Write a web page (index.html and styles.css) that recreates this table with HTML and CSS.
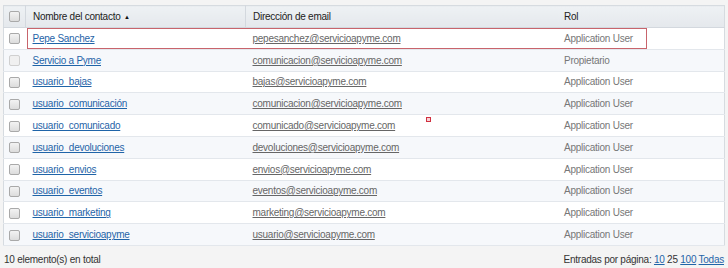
FILE: index.html
```html
<!DOCTYPE html>
<html lang="es">
<head>
<meta charset="utf-8">
<link rel="stylesheet" href="styles.css">
</head>
<body>
<div class="wrap">
  <table class="grid">
    <thead>
      <tr>
        <th class="c-chk"><span class="chk"></span></th>
        <th class="c-name sorted">Nombre del contacto <span class="arrow">&#9650;</span></th>
        <th class="c-mail">Dirección de email</th>
        <th class="c-rol">Rol</th>
      </tr>
    </thead>
    <tbody>
      <tr><td class="c-chk"><span class="chk"></span></td><td><a class="name" href="#">Pepe Sanchez</a></td><td><a class="mail" href="#">pepesanchez@servicioapyme.com</a></td><td class="rol">Application User</td></tr>
      <tr><td class="c-chk"><span class="chk dis"></span></td><td><a class="name" href="#">Servicio a Pyme</a></td><td><a class="mail" href="#">comunicacion@servicioapyme.com</a></td><td class="rol">Propietario</td></tr>
      <tr><td class="c-chk"><span class="chk"></span></td><td><a class="name" href="#">usuario_bajas</a></td><td><a class="mail" href="#">bajas@servicioapyme.com</a></td><td class="rol">Application User</td></tr>
      <tr><td class="c-chk"><span class="chk"></span></td><td><a class="name" href="#">usuario_comunicación</a></td><td><a class="mail" href="#">comunicacion@servicioapyme.com</a></td><td class="rol">Application User</td></tr>
      <tr><td class="c-chk"><span class="chk"></span></td><td><a class="name" href="#">usuario_comunicado</a></td><td><a class="mail" href="#">comunicado@servicioapyme.com</a></td><td class="rol">Application User</td></tr>
      <tr><td class="c-chk"><span class="chk"></span></td><td><a class="name" href="#">usuario_devoluciones</a></td><td><a class="mail" href="#">devoluciones@servicioapyme.com</a></td><td class="rol">Application User</td></tr>
      <tr><td class="c-chk"><span class="chk"></span></td><td><a class="name" href="#">usuario_envios</a></td><td><a class="mail" href="#">envios@servicioapyme.com</a></td><td class="rol">Application User</td></tr>
      <tr><td class="c-chk"><span class="chk"></span></td><td><a class="name" href="#">usuario_eventos</a></td><td><a class="mail" href="#">eventos@servicioapyme.com</a></td><td class="rol">Application User</td></tr>
      <tr><td class="c-chk"><span class="chk"></span></td><td><a class="name" href="#">usuario_marketing</a></td><td><a class="mail" href="#">marketing@servicioapyme.com</a></td><td class="rol">Application User</td></tr>
      <tr><td class="c-chk"><span class="chk"></span></td><td><a class="name" href="#">usuario_servicioapyme</a></td><td><a class="mail" href="#">usuario@servicioapyme.com</a></td><td class="rol">Application User</td></tr>
    </tbody>
  </table>
  <div class="highlight"></div>
  <div class="dot"></div>
  <div class="footer">
    <span>10 elemento(s) en total</span>
    <span class="pager">Entradas por página: <a href="#">10</a> 25 <a href="#">100</a> <a href="#">Todas</a></span>
  </div>
</div>
</body>
</html>
```

FILE: styles.css
```css
html, body {
  margin: 0;
  padding: 0;
  background: #f4f4f4;
}
body {
  font-family: "Liberation Sans", Arial, sans-serif;
  font-size: 10px;
  letter-spacing: -0.25px;
  color: #333;
}
.wrap {
  position: relative;
  padding: 5px 3px 0 3px;
}
.grid {
  width: 722px;
  border-collapse: collapse;
  background: #fff;
  border: 1px solid #d6dbe0;
  table-layout: fixed;
}
.grid th {
  height: 21px;
  padding: 0 0 0 7px;
  text-align: left;
  font-weight: normal;
  font-size: 10px;
  color: #222;
  background: linear-gradient(#eef1f4, #e4e8ec);
  border-bottom: 1px solid #d3d8de;
}
.grid th.c-chk { width: 21px; padding: 0; text-align: center; border-right: 1px solid #d3d8de; }
.grid th.c-name { width: 212px; border-right: 1px solid #d3d8de; }
.grid th.c-mail { width: 304px; }
.arrow { font-size: 6px; position: relative; top: -1px; margin-left: 1px; color: #111; }
.grid td {
  height: 20.8px;
  padding: 0 0 0 7px;
  border-bottom: 1px solid #e3e7ec;
  white-space: nowrap;
}
.grid td.c-chk { padding: 0; text-align: center; }
.grid tbody tr:nth-child(even) td { background: #f6f8fb; }
.chk {
  display: inline-block;
  width: 9px;
  height: 9px;
  border: 1px solid #a9a9a9;
  border-radius: 2px;
  background: linear-gradient(#f3f3f3, #dcdcdc);
  vertical-align: middle;
}
.chk.dis { border-color: #d0d0d0; background: #f0f0f0; }
a.name { color: #1f64a8; text-decoration: underline; }
a.mail { color: #666; text-decoration: underline; }
.rol { color: #777; }
.highlight {
  position: absolute;
  left: 27px;
  top: 28px;
  width: 618px;
  height: 19px;
  border: 1px solid #c8646c;
}
.dot {
  position: absolute;
  left: 426px;
  top: 117px;
  width: 3px;
  height: 3px;
  border: 1px solid #d03040;
  background: #f8d0d4;
}
.footer {
  display: flex;
  justify-content: space-between;
  padding: 8px 1px 0 1px;
  color: #333;
}
.pager a { color: #1f64a8; text-decoration: underline; }
```
